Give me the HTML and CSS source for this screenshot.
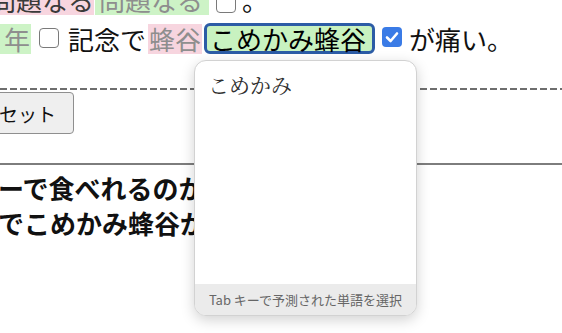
FILE: index.html
```html
<!DOCTYPE html>
<html lang="ja">
<head>
<meta charset="utf-8">
<title>予測変換</title>
<link rel="stylesheet" href="styles.css">
</head>
<body>
<div class="page">
  <div class="para">
    <div class="row row-1">
      <span class="seg pink dark first">問題なる</span><span class="seg green grey pad-r">問題なる</span>
      <span class="box box-1"></span>
      <span class="plain">。</span>
    </div>
    <div class="row">
      <span class="seg green grey nen">年</span>
      <span class="box box-2"></span>
      <span class="plain">記念で</span><span class="seg pink grey hachi">蜂谷</span><span class="field">こめかみ蜂谷</span>
      <span class="box checked"><svg viewBox="0 0 20 20" width="20" height="20"><path d="M5 10.5 L8.6 14 L15 6.5" fill="none" stroke="#fff" stroke-width="2.6" stroke-linecap="round" stroke-linejoin="round"/></svg></span>
      <span class="plain itai">が痛い。</span>
    </div>
  </div>
  <div class="dashed"></div>
  <button class="btn" type="button">リセット</button>
  <div class="rule"></div>
  <div class="result">
    <p class="line">ーで食べれるのかな？</p>
    <p class="line">でこめかみ蜂谷が痛い。</p>
  </div>
</div>
<div class="popup">
  <div class="suggest">こめかみ</div>
  <div class="hint">Tab キーで予測された単語を選択</div>
</div>
</body>
</html>
```

FILE: styles.css
```css
html, body {
  margin: 0;
  padding: 0;
  background: #fff;
}
body {
  width: 562px;
  height: 333px;
  overflow: hidden;
  position: relative;
  font-family: "Noto Sans CJK JP", "Noto Sans", sans-serif;
  color: #111;
}
.page {
  display: flex;
  flex-direction: column;
  align-items: flex-start;
}
.para {
  margin-top: -21px;
  font-size: 26px;
  width: 100%;
}
.row {
  display: flex;
  align-items: center;
  height: 40px;
  white-space: nowrap;
}
.row-1 {
  padding-top: 2px;
  height: 38px;
}
.seg, .plain {
  display: inline-block;
  height: 30px;
  line-height: 30px;
}
.pink { background: #f7d5df; }
.green { background: #cdf3c6; }
.dark { color: #3a3a3a; }
.grey { color: #8e8e8e; }
.first { margin-left: -10px; }
.pad-r { margin-left: 1px; padding: 0 6px 0 4px; }
.box {
  display: block;
  box-sizing: border-box;
  width: 20px;
  min-width: 20px;
  height: 20px;
  border: 1.5px solid #7a7a7a;
  border-radius: 4px;
  background: #fff;
  flex: none;
}
.box-1 { margin: 0 6px 0 7px; position: relative; top: 3px; }
.box-2 { margin: 0 9px 0 8px; position: relative; top: -1px; }
.nen { padding: 0 1px 0 4px; }
.hachi { margin-left: 2px; padding: 0 1px; }
.field {
  display: inline-block;
  margin-left: 2px;
  width: 159px;
  height: 25px;
  line-height: 25px;
  padding: 0 3px 0 3px;
  border: 3px solid #2c5ca6;
  border-radius: 6px;
  background: #c8f2c0;
  color: #000;
  position: relative;
  top: -1px;
}
.checked {
  border: none;
  background: #3a7be6;
  margin: 0 7px 0 7px;
  position: relative;
  top: -2px;
}
.checked svg { display: block; }
.itai { color: #111; }
.dashed {
  margin-top: 29px;
  width: 100%;
  height: 2px;
  background: repeating-linear-gradient(to right, #6e6e6e 0 7px, transparent 7px 10px);
}
.btn {
  margin-top: 2px;
  margin-left: -38px;
  height: 42px;
  padding: 0 17px;
  font-family: "Noto Sans CJK JP", sans-serif;
  font-size: 19px;
  color: #111;
  background: #efefef;
  border: 1px solid #8f8f8f;
  border-radius: 4px;
}
.rule {
  margin-top: 29px;
  width: 100%;
  height: 2px;
  background: #7d7d7d;
}
.result {
  margin-top: 5px;
  margin-left: -2px;
}
.line {
  margin: 0;
  font-size: 26px;
  font-weight: bold;
  line-height: 35px;
  white-space: nowrap;
  color: #111;
}
.popup {
  position: absolute;
  left: 194px;
  top: 60px;
  width: 221px;
  height: 254px;
  background: #fff;
  border: 1px solid #d2d2d2;
  border-radius: 12px;
  box-shadow: 0 4px 14px rgba(0, 0, 0, 0.18);
  display: flex;
  flex-direction: column;
  overflow: hidden;
  z-index: 10;
}
.suggest {
  flex: 1;
  padding: 8px 13px;
  font-family: "Noto Serif CJK JP", "Noto Sans CJK JP", serif;
  font-size: 21px;
  font-weight: 400;
  line-height: 30px;
  color: #2e2e2e;
}
.hint {
  height: 31px;
  line-height: 31px;
  background: #ebebeb;
  text-align: center;
  font-size: 13px;
  color: #666;
  white-space: nowrap;
}
```
